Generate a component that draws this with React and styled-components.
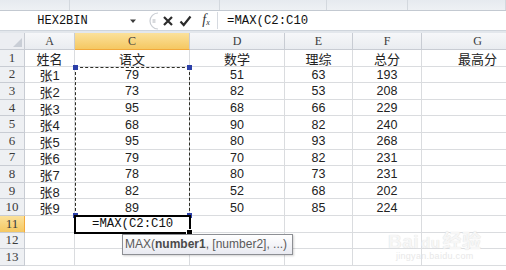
import React from 'react'
import styled, { createGlobalStyle } from 'styled-components'

const GlobalStyle = createGlobalStyle`
html, body {
    margin: 0;
    padding: 0;
    background: #fff;
}
body {
    width: 506px;
    height: 270px;
    overflow: hidden;
}
`

const columns = [
    { key: 'A', width: 50 },
    { key: 'C', width: 115, selected: true },
    { key: 'D', width: 95 },
    { key: 'E', width: 68 },
    { key: 'F', width: 69 },
    { key: 'G', width: 112 },
]

const ribbonGroups = [70, 150, 107, 81, 98]

const data = [
    ['姓名', '语文', '数学', '理综', '总分', '最高分'],
    ['张1', 79, 51, 63, 193, ''],
    ['张2', 73, 82, 53, 208, ''],
    ['张3', 95, 68, 66, 229, ''],
    ['张4', 68, 90, 82, 240, ''],
    ['张5', 95, 80, 93, 268, ''],
    ['张6', 79, 70, 82, 231, ''],
    ['张7', 78, 80, 73, 231, ''],
    ['张8', 82, 52, 68, 202, ''],
    ['张9', 89, 50, 85, 224, ''],
    ['', '', '', '', '', ''],
    ['', '', '', '', '', ''],
    ['', '', '', '', '', ''],
]

function App() {
    return (
        <Window>
            <GlobalStyle />
            <RibbonEdge>
                {ribbonGroups.map((w, i) => (
                    <RibbonGroup key={i} $w={w} />
                ))}
            </RibbonEdge>

            <FormulaBar>
                <NameBox>HEX2BIN</NameBox>
                <Arrow>
                    <svg width="8" height="6" viewBox="0 0 8 6"><path d="M1 1.5h6L4 5z" fill="#3c3c3c" /></svg>
                </Arrow>
                <Splitter>
                    <svg width="14" height="18" viewBox="0 0 14 18">
                        <path d="M13 1A8 8 0 0 0 13 17" fill="none" stroke="#c8ccd2" strokeWidth="1.2" />
                        <path d="M7.5 8h3M7.5 10h3" stroke="#b0b4ba" strokeWidth="1" />
                    </svg>
                </Splitter>
                <BarIcon>
                    <svg width="12" height="12" viewBox="0 0 12 12"><path d="M2 2l8 8M10 2l-8 8" stroke="#2b2b2b" strokeWidth="2.2" /></svg>
                </BarIcon>
                <BarIcon>
                    <svg width="13" height="12" viewBox="0 0 13 12"><path d="M1.5 6.5l3.2 3.5L11.5 1.5" fill="none" stroke="#2b2b2b" strokeWidth="2.2" /></svg>
                </BarIcon>
                <Fx>f<sub>x</sub></Fx>
                <FormulaInput>=MAX(C2:C10</FormulaInput>
            </FormulaBar>

            <Gap />

            <SheetArea>
                <Sheet $cols={columns.map(c => c.width + 'px').join(' ')}>
                    <Corner>
                        <svg width="9" height="9" viewBox="0 0 9 9"><path d="M9 0v9H0z" fill="#c9ced6" /></svg>
                    </Corner>
                    {columns.map(c => (
                        <ColHeader key={c.key} $selected={c.selected}>{c.key}</ColHeader>
                    ))}
                    {data.map((row, r) => (
                        <React.Fragment key={r}>
                            <RowHeader $selected={r === 10}>{r + 1}</RowHeader>
                            {row.map((v, c) => (
                                <Cell key={c} $num={typeof v === 'number'}>{v}</Cell>
                            ))}
                        </React.Fragment>
                    ))}
                </Sheet>

                <CopyRange>
                    <Handle style={{ left: -3, top: -3 }} />
                    <Handle style={{ right: -3, top: -3 }} />
                    <Handle style={{ left: -3, bottom: -3 }} />
                    <Handle style={{ right: -3, bottom: -3 }} />
                </CopyRange>

                <ActiveCell>
                    =MAX(C2:C10
                    <FillHandle />
                </ActiveCell>

                <Tooltip>
                    MAX(<b>number1</b>, [number2], ...)
                </Tooltip>

                <Watermark>
                    <WmLogo>Bai<Paw>du</Paw>经验</WmLogo>
                    <WmUrl>jingyan.baidu.com</WmUrl>
                </Watermark>
            </SheetArea>
        </Window>
    )
}

export default App

const Window = styled.div`
width: 506px;
height: 270px;
overflow: hidden;
display: flex;
flex-direction: column;
background: #fff;
font-family: "Liberation Sans", "Noto Sans CJK SC", sans-serif;
`

const RibbonEdge = styled.div`
height: 10px;
flex: none;
display: flex;
background: linear-gradient(#e6eaef, #eef1f4);
border-bottom: 1px solid #c3c9d1;
`

const RibbonGroup = styled.div`
width: ${p => p.$w}px;
height: 100%;
border-right: 1px solid #d3d8de;
`

const FormulaBar = styled.div`
height: 19px;
flex: none;
display: flex;
align-items: center;
background: #fff;
`

const NameBox = styled.div`
width: 125px;
text-align: center;
font-family: "Liberation Mono", monospace;
font-size: 12px;
color: #111;
padding-top: 1px;
`

const Arrow = styled.div`
width: 16px;
display: flex;
justify-content: center;
`

const Splitter = styled.div`
width: 18px;
display: flex;
justify-content: flex-end;
`

const BarIcon = styled.div`
width: 16px;
display: flex;
justify-content: center;
margin-left: 1px;
`

const Fx = styled.div`
width: 22px;
font-family: "Liberation Serif", serif;
font-style: italic;
font-size: 14px;
color: #333;
text-align: center;
border-right: 1px solid #d6dae0;
height: 17px;
line-height: 15px;
margin-left: 2px;

sub {
    font-size: 8px;
    vertical-align: -1px;
}
`

const FormulaInput = styled.div`
flex: 1;
padding-left: 9px;
font-family: "Liberation Mono", monospace;
font-size: 12.3px;
color: #111;
`

const Gap = styled.div`
height: 2px;
flex: none;
background: #e3e7ec;
border-top: 1px solid #cfd5dc;
`

const SheetArea = styled.div`
position: relative;
flex: 1;
overflow: hidden;
`

const Sheet = styled.div`
display: grid;
grid-template-columns: 25px ${p => p.$cols};
grid-template-rows: 17px repeat(13, 16.6px);
`

const headerBase = `
box-sizing: border-box;
display: flex;
align-items: center;
justify-content: center;
font-family: "Liberation Serif", serif;
font-size: 12px;
color: #3b3b3b;
border-right: 1px solid #c8ccd3;
border-bottom: 1px solid #c8ccd3;
`

const Corner = styled.div`
${headerBase}
background: #eceef2;
align-items: flex-end;
justify-content: flex-end;
padding: 0 2px 2px 0;
`

const ColHeader = styled.div`
${headerBase}
background: ${p => p.$selected
    ? 'linear-gradient(#fbe19b, #f5c862)'
    : 'linear-gradient(#f6f7f9, #e9ecf0)'};
border-bottom-color: ${p => p.$selected ? '#f2a93b' : '#c8ccd3'};
`

const RowHeader = styled.div`
${headerBase}
background: ${p => p.$selected
    ? 'linear-gradient(#fbe19b, #f5c862)'
    : '#eef0f3'};
border-right-color: ${p => p.$selected ? '#f2a93b' : '#c8ccd3'};
font-size: 13px;
`

const Cell = styled.div`
box-sizing: border-box;
display: flex;
align-items: center;
justify-content: center;
border-right: 1px solid #dadcdf;
border-bottom: 1px solid #dadcdf;
font-size: ${p => p.$num ? '12.5px' : '13px'};
color: #222;
white-space: nowrap;
padding-top: 1px;
`

const CopyRange = styled.div`
position: absolute;
left: 75px;
top: 33.6px;
width: 115px;
height: 149.4px;
box-sizing: border-box;
border: 1.5px dashed #2d2d24;
`

const Handle = styled.span`
position: absolute;
width: 5px;
height: 5px;
background: #2b3fa8;
`

const ActiveCell = styled.div`
position: absolute;
left: 74px;
top: 182px;
width: 117px;
height: 18.6px;
box-sizing: border-box;
border: 2px solid #000;
background: #fff;
font-family: "Liberation Mono", monospace;
font-size: 12.3px;
color: #111;
padding-left: 16px;
line-height: 15px;
`

const FillHandle = styled.span`
position: absolute;
right: -4px;
bottom: -4px;
width: 5px;
height: 5px;
background: #000;
border: 1px solid #fff;
`

const Tooltip = styled.div`
position: absolute;
left: 122px;
top: 201px;
width: 171px;
height: 21px;
box-sizing: border-box;
border: 1px solid #8d8f94;
background: linear-gradient(#ffffff, #e9eaf1);
box-shadow: 1px 1px 2px rgba(0, 0, 0, 0.18);
font-size: 12px;
line-height: 19px;
color: #5a5a5a;
padding-left: 2px;
white-space: nowrap;

b {
    color: #4a4a4a;
}
`

const Watermark = styled.div`
position: absolute;
left: 388px;
top: 193px;
display: flex;
flex-direction: column;
align-items: center;
pointer-events: none;
`

const WmLogo = styled.div`
font-size: 19px;
font-weight: bold;
color: #f6f6f6;
text-shadow: 0 0 1px #d6d6d6;
letter-spacing: 0.5px;
`

const Paw = styled.span`
font-size: 15px;
margin: 0 2px;
`

const WmUrl = styled.div`
font-size: 9px;
color: #e8e8e8;
margin-top: -2px;
letter-spacing: 0.3px;
`
